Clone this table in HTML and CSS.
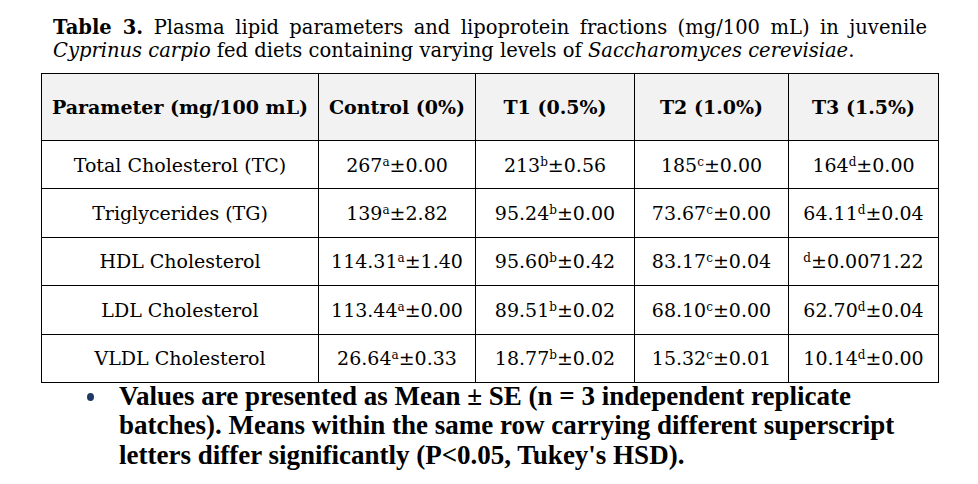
FILE: index.html
```html
<!DOCTYPE html>
<html>
<head>
<meta charset="utf-8">
<link rel="stylesheet" href="styles.css">
</head>
<body>
<div class="page">
  <p class="caption"><b class="label">Table 3.</b> Plasma lipid parameters and lipoprotein fractions (mg/100 mL) in juvenile <i>Cyprinus carpio</i> fed diets containing varying levels of <i>Saccharomyces cerevisiae</i>.</p>
  <table class="data">
    <colgroup>
      <col class="c1"><col class="c2"><col class="c3"><col class="c4"><col class="c5">
    </colgroup>
    <thead>
      <tr><th>Parameter (mg/100 mL)</th><th>Control (0%)</th><th>T1 (0.5%)</th><th>T2 (1.0%)</th><th>T3 (1.5%)</th></tr>
    </thead>
    <tbody>
      <tr><td>Total Cholesterol (TC)</td><td>267<sup>a</sup>±0.00</td><td>213<sup>b</sup>±0.56</td><td>185<sup>c</sup>±0.00</td><td>164<sup>d</sup>±0.00</td></tr>
      <tr><td>Triglycerides (TG)</td><td>139<sup>a</sup>±2.82</td><td>95.24<sup>b</sup>±0.00</td><td>73.67<sup>c</sup>±0.00</td><td>64.11<sup>d</sup>±0.04</td></tr>
      <tr><td>HDL Cholesterol</td><td>114.31<sup>a</sup>±1.40</td><td>95.60<sup>b</sup>±0.42</td><td>83.17<sup>c</sup>±0.04</td><td><sup>d</sup>±0.0071.22</td></tr>
      <tr><td>LDL Cholesterol</td><td>113.44<sup>a</sup>±0.00</td><td>89.51<sup>b</sup>±0.02</td><td>68.10<sup>c</sup>±0.00</td><td>62.70<sup>d</sup>±0.04</td></tr>
      <tr><td>VLDL Cholesterol</td><td>26.64<sup>a</sup>±0.33</td><td>18.77<sup>b</sup>±0.02</td><td>15.32<sup>c</sup>±0.01</td><td>10.14<sup>d</sup>±0.00</td></tr>
    </tbody>
  </table>
  <ul class="notes">
    <li>Values are presented as Mean ± SE (n = 3 independent replicate batches). Means within the same row carrying different superscript letters differ significantly (P&lt;0.05, Tukey's HSD).</li>
  </ul>
</div>
</body>
</html>
```

FILE: styles.css
```css
html, body {
  margin: 0;
  padding: 0;
  background: #ffffff;
}
body {
  font-family: "DejaVu Serif", Georgia, serif;
  color: #000000;
}
.page {
  width: 978px;
  height: 484px;
  overflow: hidden;
  padding-top: 16px;
  box-sizing: border-box;
}
.caption {
  margin: 0 0 0 53px;
  width: 874px;
  font-size: 19.5px;
  line-height: 23px;
  text-align: justify;
  text-align-last: left;
}
.caption .label {
  font-weight: bold;
}
.data {
  margin: 11px 0 0 41px;
  width: 897px;
  border-collapse: collapse;
  table-layout: fixed;
}
.c1 { width: 277px; }
.c2 { width: 157px; }
.c3 { width: 159px; }
.c4 { width: 154px; }
.c5 { width: 150px; }
.data th, .data td {
  border: 1px solid #000000;
  text-align: center;
  padding: 0;
  white-space: nowrap;
}
.data th {
  background: #f2f2f2;
  height: 66px;
  font-size: 19px;
  font-weight: bold;
}
.data td {
  height: 47.4px;
  font-size: 19px;
}
.data sup {
  font-size: 12px;
  line-height: 0;
  vertical-align: 6px;
}
.notes {
  margin: -1px 0 0 0;
  padding: 0 0 0 119px;
  width: 800px;
  list-style: none;
}
.notes li {
  position: relative;
  font-family: "Liberation Serif", "Times New Roman", serif;
  font-size: 27px;
  line-height: 29.5px;
  font-weight: bold;
}
.notes li::before {
  content: "";
  position: absolute;
  left: -32px;
  top: 11px;
  width: 7px;
  height: 8px;
  border-radius: 50%;
  background: #1f3864;
}
```
